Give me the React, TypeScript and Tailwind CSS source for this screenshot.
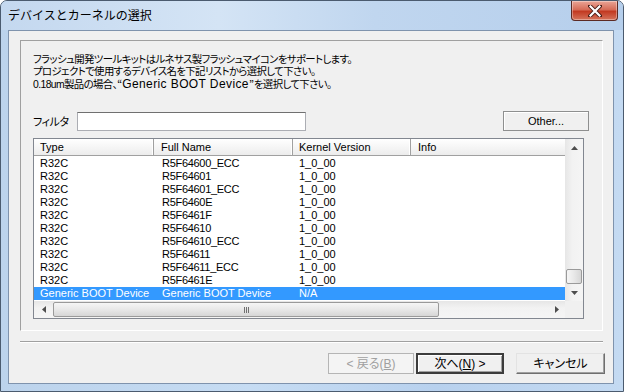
import React from 'react'

const jp = "font-['Noto_Sans_CJK_JP','Liberation_Sans',sans-serif]"
const ui = "font-['Liberation_Sans','Noto_Sans_CJK_JP',sans-serif]"

const rows: [string, string, string][] = [
  ['R32C', 'R5F64600_ECC', '1_0_00'],
  ['R32C', 'R5F64601', '1_0_00'],
  ['R32C', 'R5F64601_ECC', '1_0_00'],
  ['R32C', 'R5F6460E', '1_0_00'],
  ['R32C', 'R5F6461F', '1_0_00'],
  ['R32C', 'R5F64610', '1_0_00'],
  ['R32C', 'R5F64610_ECC', '1_0_00'],
  ['R32C', 'R5F64611', '1_0_00'],
  ['R32C', 'R5F64611_ECC', '1_0_00'],
  ['R32C', 'R5F6461E', '1_0_00'],
]

function Tri({ dir }: { dir: 'up' | 'down' | 'left' | 'right' }) {
  const pts = {
    up: '0,4 7,4 3.5,0',
    down: '0,0 7,0 3.5,4',
    left: '4,0 4,7 0,3.5',
    right: '0,0 0,7 4,3.5',
  }[dir]
  const vertical = dir === 'up' || dir === 'down'
  return (
    <svg width={vertical ? 7 : 4} height={vertical ? 4 : 7} viewBox={vertical ? '0 0 7 4' : '0 0 4 7'}>
      <polygon points={pts} fill="#4d4d4d" />
    </svg>
  )
}

function Header({ label, w, pl }: { label: string; w: string; pl: string }) {
  return (
    <div className={`${w} ${pl} h-full flex items-center border-r border-[#a0a0a0] shadow-[inset_-1px_0_0_#ffffff] shrink-0`}>
      {label}
    </div>
  )
}

export default function App() {
  return (
    <div className="w-[624px] h-[392px] overflow-hidden rounded-t-[7px] border border-[#4b5b6f] bg-[linear-gradient(90deg,#bcd3ec_0%,#c6dcf3_40%,#b8d1ee_70%,#c4daf2_100%)] flex flex-col">
      {/* title bar */}
      <div className="h-[29px] flex items-start justify-between shrink-0 bg-[linear-gradient(90deg,#c4d8ef_0%,#d4e4f5_35%,#c0d6ef_60%,#b6cfec_100%)]">
        <div className={`${jp} pl-[7px] pt-[5px] text-[12px] leading-[18px] text-black`}>デバイスとカーネルの選択</div>
        <div className="mr-[5px] w-[47px] h-[20px] rounded-b-[4px] border border-t-0 border-[#5c2a24] bg-[linear-gradient(180deg,#eaa596_0%,#d66c58_45%,#c23a22_55%,#d5745c_100%)] flex items-center justify-center shadow-[inset_0_0_0_1px_rgba(255,255,255,0.35)]">
          <svg width="14" height="12" viewBox="0 0 14 12">
            <path d="M2 1 L12 11 M12 1 L2 11" stroke="#4a1e18" strokeWidth="4" strokeLinecap="square" />
            <path d="M2.5 1.5 L11.5 10.5 M11.5 1.5 L2.5 10.5" stroke="#ffffff" strokeWidth="2.2" strokeLinecap="square" />
          </svg>
        </div>
      </div>

      {/* client area */}
      <div className="ml-[7px] mr-[9px] mb-[7px] flex-1 border border-[#7f93ad] bg-[#f0f0f0] flex flex-col">
        {/* inner panel */}
        <div className="ml-[11px] mt-[9px] w-[583px] h-[291px] border-t border-l border-[#a0a0a0] border-b border-r border-b-white border-r-white flex flex-col">
          <div className={`${ui} pl-[12px] pt-[13px] text-[10.4px] leading-[12px] tracking-[-0.6px] [font-feature-settings:'palt'] text-black`}>
            <div className="h-[12px] whitespace-nowrap">フラッシュ開発ツールキットはルネサス製フラッシュマイコンをサポートします。</div>
            <div className="h-[12px] whitespace-nowrap">プロジェクトで使用するデバイス名を下記リストから選択して下さい。</div>
            <div className="h-[12px] whitespace-nowrap">
              0.18um製品の場合、<span className={`${jp} tracking-[0px] [font-feature-settings:normal]`}>“</span>
              <span className="text-[12px] tracking-[0.4px]">Generic BOOT Device</span>
              <span className={`${jp} tracking-[0px] [font-feature-settings:normal]`}>”</span>を選択して下さい。
            </div>
          </div>

          {/* filter row */}
          <div className="mt-[21px] pl-[12px] pr-[13px] flex items-center h-[20px]">
            <div className={`${jp} w-[44px] text-[11px] tracking-[-0.4px] [font-feature-settings:'palt'] text-black`}>フィルタ</div>
            <div className="w-[229px] h-[19px] border border-[#abadb3] border-t-[#707070] bg-white" />
            <div className={`${ui} ml-auto w-[86px] h-[20px] border border-[#8e8f8f] bg-[#f0f0f0] shadow-[inset_1px_1px_0_#ffffff] flex items-center justify-center text-[11px] text-black`}>
              Other...
            </div>
          </div>

          {/* list view */}
          <div className={`${ui} ml-[12px] mt-[7px] w-[551px] h-[181px] border border-[#828790] bg-white flex text-[11px] text-black`}>
            <div className="w-[531px] flex flex-col">
              <div className="h-[17px] flex border-b border-[#a0a0a0] bg-[linear-gradient(180deg,#ffffff_0%,#f4f4f4_60%,#ececec_100%)] shrink-0">
                <Header label="Type" w="w-[120px]" pl="pl-[6px]" />
                <Header label="Full Name" w="w-[139px]" pl="pl-[7px]" />
                <Header label="Kernel Version" w="w-[118px]" pl="pl-[6px]" />
                <div className="flex-1 pl-[7px] flex items-center">Info</div>
              </div>
              <div className="flex-1 pt-[1px] flex flex-col overflow-hidden">
                {rows.map(([t, n, k], i) => (
                  <div key={i} className="h-[13px] flex items-center leading-[13px] shrink-0">
                    <div className="w-[120px] pl-[6px] shrink-0">{t}</div>
                    <div className="w-[139px] pl-[8px] shrink-0 tracking-[-0.3px]">{n}</div>
                    <div className="w-[118px] pl-[6px] shrink-0">{k}</div>
                  </div>
                ))}
                <div className="h-[13px] flex items-center leading-[13px] shrink-0 bg-[#3399ff] text-white">
                  <div className="w-[120px] pl-[6px] shrink-0 whitespace-nowrap">Generic BOOT Device</div>
                  <div className="w-[139px] pl-[8px] shrink-0 whitespace-nowrap">Generic BOOT Device</div>
                  <div className="w-[118px] pl-[6px] shrink-0">N/A</div>
                </div>
              </div>
              {/* horizontal scrollbar */}
              <div className="h-[17px] shrink-0 flex items-center bg-[linear-gradient(180deg,#e6e6e6_0%,#f2f2f2_40%,#f5f5f5_100%)]">
                <div className="w-[19px] flex justify-center"><Tri dir="left" /></div>
                <div className="w-[386px] h-[15px] rounded-[2px] border border-[#9a9a9a] bg-[linear-gradient(180deg,#f6f6f6_0%,#e8e8e8_50%,#d6d6d6_100%)] flex items-center justify-center">
                  <div className="flex gap-[1px]">
                    <div className="w-[1px] h-[6px] bg-[#707070]" />
                    <div className="w-[1px] h-[6px] bg-[#707070]" />
                    <div className="w-[1px] h-[6px] bg-[#707070]" />
                  </div>
                </div>
                <div className="flex-1" />
                <div className="w-[17px] flex justify-center"><Tri dir="right" /></div>
              </div>
            </div>
            {/* vertical scrollbar + corner */}
            <div className="w-[18px] flex flex-col">
              <div className="flex-1 flex flex-col bg-[linear-gradient(90deg,#e6e6e6_0%,#f2f2f2_40%,#f5f5f5_100%)]">
                <div className="h-[17px] flex items-center justify-center"><Tri dir="up" /></div>
                <div className="flex-1" />
                <div className="h-[15px] mx-[1px] rounded-[2px] border border-[#9a9a9a] bg-[linear-gradient(90deg,#f6f6f6_0%,#e8e8e8_50%,#d6d6d6_100%)]" />
                <div className="h-[17px] flex items-center justify-center"><Tri dir="down" /></div>
              </div>
              <div className="h-[17px] bg-[#f0f0f0]" />
            </div>
          </div>
        </div>

        {/* separator */}
        <div className="ml-[11px] mt-[10px] w-[583px] border-t border-[#a0a0a0] border-b border-b-white" />

        {/* buttons */}
        <div className={`${ui} mt-[10px] flex text-[12px] [font-feature-settings:'palt']`}>
          <div className="ml-[319px] w-[86px] h-[21px] border border-[#b5b5b5] bg-[#f4f4f4] flex items-center justify-center text-[#a0a0a0]">
            &lt; 戻る(<span className="underline">B</span>)
          </div>
          <div className="ml-[2px] w-[88px] h-[21px] border-2 border-[#3c3c3c] bg-[#f0f0f0] shadow-[inset_1px_1px_0_#ffffff,inset_-1px_-1px_0_#a0a0a0] flex items-center justify-center text-black">
            次へ(<span className="underline">N</span>) &gt;
          </div>
          <div className="ml-[12px] w-[89px] h-[21px] border border-[#6f6f6f] border-t-[#e3e3e3] border-l-[#e3e3e3] bg-[#f0f0f0] shadow-[inset_-1px_-1px_0_#a0a0a0] flex items-center justify-center text-black">
            キャンセル
          </div>
        </div>
      </div>
    </div>
  )
}
